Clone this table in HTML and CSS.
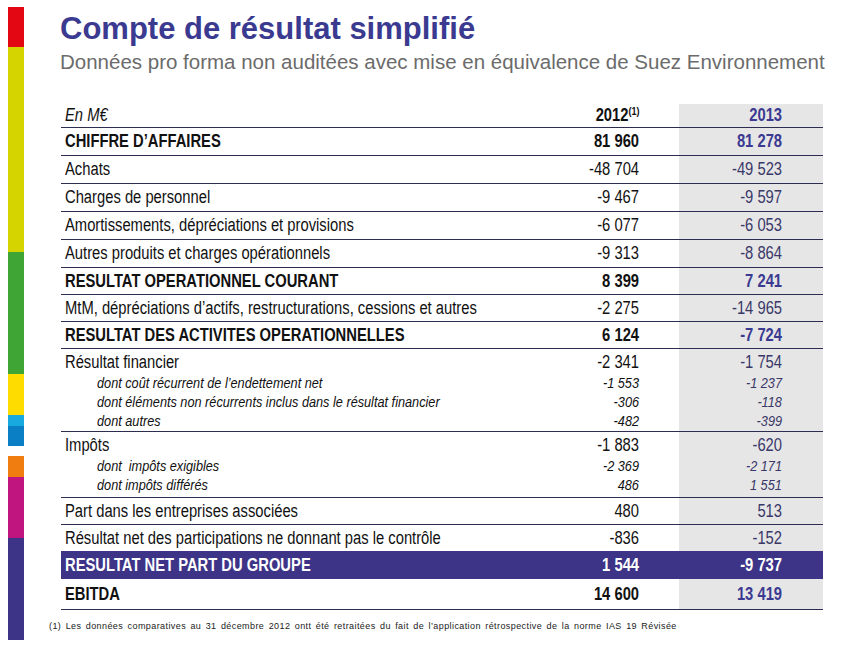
FILE: index.html
```html
<!DOCTYPE html>
<html lang="fr">
<head>
<meta charset="utf-8">
<title>Compte de résultat simplifié</title>
<link rel="stylesheet" href="styles.css">
</head>
<body>
<div class="page">
  <div class="colorbar">
    <div class="seg red"></div>
    <div class="seg lime"></div>
    <div class="seg green"></div>
    <div class="seg yellow"></div>
    <div class="seg cyan"></div>
    <div class="seg blue"></div>
    <div class="seg gap"></div>
    <div class="seg orange"></div>
    <div class="seg magenta"></div>
    <div class="seg purple"></div>
  </div>
  <div class="main">
    <h1 class="title">Compte de résultat simplifié</h1>
    <p class="subtitle">Données pro forma non auditées avec mise en équivalence de Suez Environnement</p>
    <div class="pl">
      <div class="row head">
        <div class="c lbl"><span class="t it">En M€</span></div>
        <div class="c n"><span class="t b">2012<sup>(1)</sup></span></div>
        <div class="c m"><span class="t b hi">2013</span></div>
      </div>
      <div class="row h28 bold">
        <div class="c lbl"><span class="t">CHIFFRE D’AFFAIRES</span></div>
        <div class="c n"><span class="t">81 960</span></div>
        <div class="c m"><span class="t">81 278</span></div>
      </div>
      <div class="row h28">
        <div class="c lbl"><span class="t">Achats</span></div>
        <div class="c n"><span class="t">-48 704</span></div>
        <div class="c m"><span class="t">-49 523</span></div>
      </div>
      <div class="row h28">
        <div class="c lbl"><span class="t">Charges de personnel</span></div>
        <div class="c n"><span class="t">-9 467</span></div>
        <div class="c m"><span class="t">-9 597</span></div>
      </div>
      <div class="row h28">
        <div class="c lbl"><span class="t">Amortissements, dépréciations et provisions</span></div>
        <div class="c n"><span class="t">-6 077</span></div>
        <div class="c m"><span class="t">-6 053</span></div>
      </div>
      <div class="row h28">
        <div class="c lbl"><span class="t">Autres produits et charges opérationnels</span></div>
        <div class="c n"><span class="t">-9 313</span></div>
        <div class="c m"><span class="t">-8 864</span></div>
      </div>
      <div class="row h27 bold">
        <div class="c lbl"><span class="t">RESULTAT OPERATIONNEL COURANT</span></div>
        <div class="c n"><span class="t">8 399</span></div>
        <div class="c m"><span class="t">7 241</span></div>
      </div>
      <div class="row h27">
        <div class="c lbl"><span class="t">MtM, dépréciations d’actifs, restructurations, cessions et autres</span></div>
        <div class="c n"><span class="t">-2 275</span></div>
        <div class="c m"><span class="t">-14 965</span></div>
      </div>
      <div class="row h27 bold">
        <div class="c lbl"><span class="t">RESULTAT DES ACTIVITES OPERATIONNELLES</span></div>
        <div class="c n"><span class="t">6 124</span></div>
        <div class="c m"><span class="t">-7 724</span></div>
      </div>
      <div class="group g-fin">
        <div class="row gmain">
          <div class="c lbl"><span class="t">Résultat financier</span></div>
          <div class="c n"><span class="t">-2 341</span></div>
          <div class="c m"><span class="t">-1 754</span></div>
        </div>
        <div class="row gsub">
          <div class="c lbl sub"><span class="t">dont coût récurrent de l’endettement net</span></div>
          <div class="c n"><span class="t">-1 553</span></div>
          <div class="c m"><span class="t">-1 237</span></div>
        </div>
        <div class="row gsub">
          <div class="c lbl sub"><span class="t">dont éléments non récurrents inclus dans le résultat financier</span></div>
          <div class="c n"><span class="t">-306</span></div>
          <div class="c m"><span class="t">-118</span></div>
        </div>
        <div class="row gsub glast">
          <div class="c lbl sub"><span class="t">dont autres</span></div>
          <div class="c n"><span class="t">-482</span></div>
          <div class="c m"><span class="t">-399</span></div>
        </div>
      </div>
      <div class="group g-tax">
        <div class="row gmain">
          <div class="c lbl"><span class="t">Impôts</span></div>
          <div class="c n"><span class="t">-1 883</span></div>
          <div class="c m"><span class="t">-620</span></div>
        </div>
        <div class="row gsub">
          <div class="c lbl sub"><span class="t">dont &nbsp;impôts exigibles</span></div>
          <div class="c n"><span class="t">-2 369</span></div>
          <div class="c m"><span class="t">-2 171</span></div>
        </div>
        <div class="row gsub glast">
          <div class="c lbl sub"><span class="t">dont impôts différés</span></div>
          <div class="c n"><span class="t">486</span></div>
          <div class="c m"><span class="t">1 551</span></div>
        </div>
      </div>
      <div class="row h27">
        <div class="c lbl"><span class="t">Part dans les entreprises associées</span></div>
        <div class="c n"><span class="t">480</span></div>
        <div class="c m"><span class="t">513</span></div>
      </div>
      <div class="row h26 noline">
        <div class="c lbl"><span class="t">Résultat net des participations ne donnant pas le contrôle</span></div>
        <div class="c n"><span class="t">-836</span></div>
        <div class="c m"><span class="t">-152</span></div>
      </div>
      <div class="row band bold">
        <div class="c lbl"><span class="t">RESULTAT NET PART DU GROUPE</span></div>
        <div class="c n"><span class="t">1 544</span></div>
        <div class="c m"><span class="t">-9 737</span></div>
      </div>
      <div class="row last bold">
        <div class="c lbl"><span class="t">EBITDA</span></div>
        <div class="c n"><span class="t">14 600</span></div>
        <div class="c m"><span class="t">13 419</span></div>
      </div>
    </div>
    <p class="footnote">(1) Les données comparatives au 31 décembre 2012 ontt été retraitées du fait de l’application rétrospective de la norme IAS 19 Révisée</p>
  </div>
</div>
</body>
</html>
```
FILE: styles.css
```css
html, body {
  margin: 0;
  padding: 0;
  background: #ffffff;
}
.page {
  width: 841px;
  height: 656px;
  display: flex;
  align-items: flex-start;
  overflow: hidden;
}
.colorbar {
  margin: 7px 0 0 8px;
  width: 16px;
  display: flex;
  flex-direction: column;
}
.seg { width: 16px; }
.red { height: 40px; background: #e30613; }
.lime { height: 205px; background: #d5d300; }
.green { height: 122px; background: #3fa535; }
.yellow { height: 41px; background: #ffdc00; }
.cyan { height: 11px; background: #18a9e1; }
.blue { height: 20px; background: #0a7fc6; }
.gap { height: 10px; background: #ffffff; }
.orange { height: 21px; background: #ef7d10; }
.magenta { height: 61px; background: #c0157e; }
.purple { height: 102px; background: #3d3387; }

.main {
  margin-left: 36px;
  display: flex;
  flex-direction: column;
}
.title {
  margin: 12px 0 0 0;
  font-family: "Liberation Sans", Arial, sans-serif;
  font-weight: bold;
  font-size: 31px;
  line-height: 34px;
  color: #3b3a91;
}
.subtitle {
  margin: 3px 0 0 0;
  font-family: "Liberation Sans", Arial, sans-serif;
  font-size: 20.5px;
  line-height: 26px;
  color: #6b6b6b;
}

/* table */
.pl {
  margin: 29px 0 0 1px;
  width: 762px;
  display: flex;
  flex-direction: column;
  font-family: "Liberation Sans", Arial, sans-serif;
  font-size: 18px;
  color: #111111;
}
.row {
  display: grid;
  grid-template-columns: 478px 140px 144px;
  box-sizing: border-box;
  border-bottom: 1px solid #2d2d52;
}
.c {
  display: flex;
  align-items: center;
  white-space: nowrap;
  line-height: 19px;
}
.c.lbl { padding-left: 4px; }
.c.n { justify-content: flex-end; padding-right: 40px; }
.c.m { justify-content: flex-end; padding-right: 41px; background: #e6e6e6; color: #3a3868; }
.t {
  display: inline-block;
  transform: scaleX(0.82);
  transform-origin: left center;
}
.c.n .t, .c.m .t { transform-origin: right center; }
.b, .bold .t { font-weight: bold; }
.bold .c.m { color: #3b3a91; }
.hi { color: #3b3a91; }
.it { font-style: italic; }
.pl sup { font-size: 11px; vertical-align: 6px; line-height: 0; }

.head { height: 24px; }
.h28 { height: 28px; }
.h27 { height: 27px; }
.h26 { height: 26px; }
.noline { border-bottom: none; }

.group { display: flex; flex-direction: column; border-bottom: 1px solid #2d2d52; }
.group .row { border-bottom: none; }
.gmain { height: 24px; }
.gmain .c { align-items: flex-start; padding-top: 4px; }
.gsub { height: 19px; font-size: 15.5px; font-style: italic; }
.gsub .c { align-items: flex-start; padding-top: 0; }
.gsub .c.lbl.sub { padding-left: 36px; }
.g-fin .gsub.glast { height: 20px; }
.g-tax .gsub.glast { height: 22px; }

.band { height: 28px; border-bottom: none; background: #3d3387; }
.band .c, .band .c.m { background: #3d3387; color: #ffffff; }
.last { height: 31px; }

.footnote {
  margin: 10px 0 0 -11px;
  font-family: "Liberation Sans", Arial, sans-serif;
  font-size: 9px;
  line-height: 12px;
  letter-spacing: 0.41px;
  word-spacing: 1.5px;
  color: #222222;
}
```
